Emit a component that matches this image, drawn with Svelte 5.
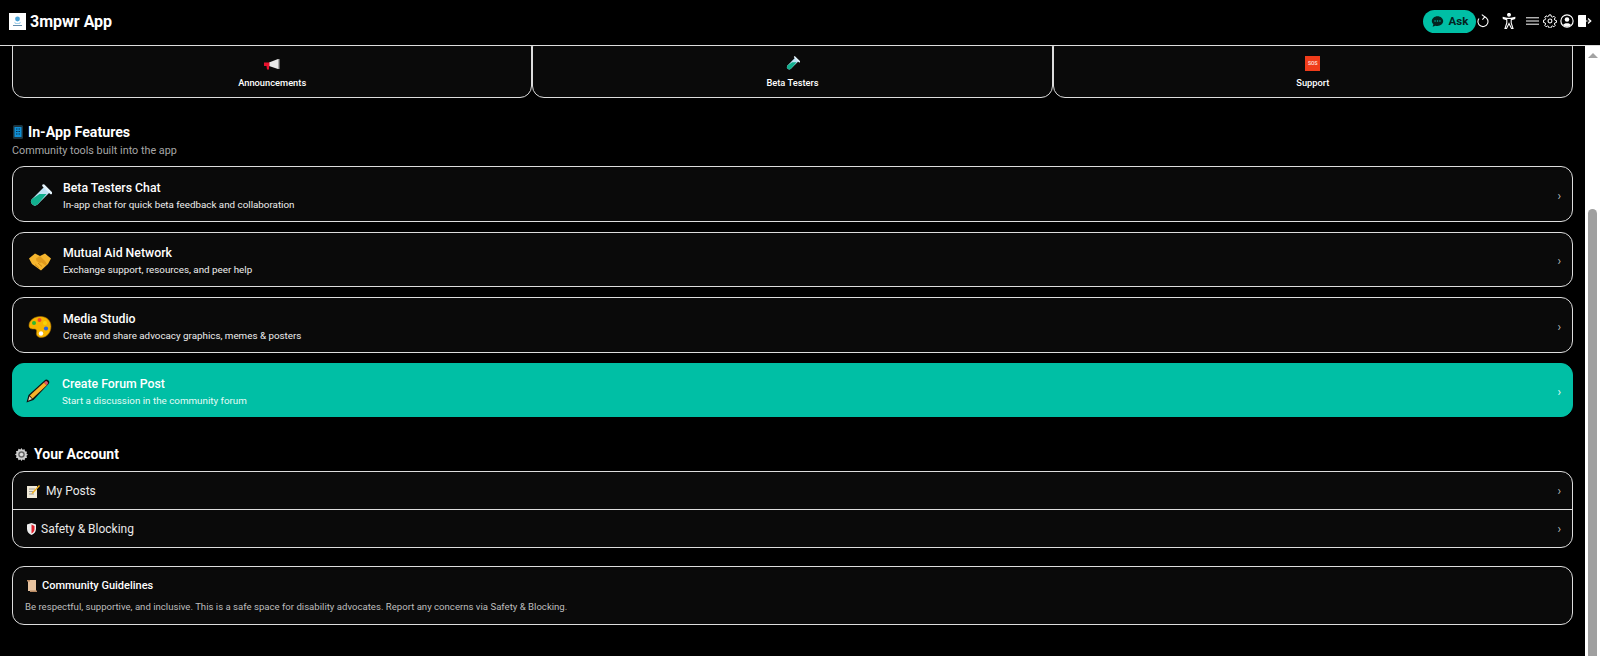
<script lang="ts">
  const features = [
    { title: 'Beta Testers Chat', desc: 'In-app chat for quick beta feedback and collaboration', icon: tube, h: 56 },
    { title: 'Mutual Aid Network', desc: 'Exchange support, resources, and peer help', icon: handshake, h: 55 },
    { title: 'Media Studio', desc: 'Create and share advocacy graphics, memes & posters', icon: palette, h: 56 }
  ];
</script>

{#snippet tube()}
  <path d="M16.5 2.5 22 8 9.5 20.5a3.9 3.9 0 0 1-5.5-5.5z" fill="#bfe3f5" />
  <path d="M11.5 10H18.500L9.500 20.500a3.900 3.900 0 0 1-5.500-5.500z" fill="#11b08e" />
  <path d="M15.500 1.500 23 9" stroke="#e4f3fb" stroke-width="2.500" stroke-linecap="round" />
{/snippet}

{#snippet handshake()}
  <path d="M1 9.500 7 4.500l5 2.500 5-2.500 6 5-3 5.500-7 6.500L4 15z" fill="#f5b52e" />
  <path d="M8 9.500 12 7l5 5 2 3-1.500 1.500-4-3-2 .5-3-2z" fill="#e09a1c" />
  <path d="M7 15.500l4 3.500M10 14l4 3.500" stroke="#d08a14" stroke-width="1" />
{/snippet}

{#snippet palette()}
  <path d="M12.500 1.500C6 1.500 1 5.500 1 10.500c0 3.500 3 3.500 5.500 3.500 2 0 2.500 1.500 2 3.500-.5 2.500 1 5 4.500 5 6 0 10-5 10-11S18.500 1.500 12.500 1.500z" fill="#f7b500" stroke="#a86f00" stroke-width=".6" />
  <circle cx="6" cy="8" r="2" fill="#2fb82f" />
  <circle cx="11.500" cy="5" r="2" fill="#ee4a2a" />
  <circle cx="17" cy="8" r="2" fill="#f7d40a" />
  <circle cx="18" cy="13.500" r="2.100" fill="#2a63d8" />
  <circle cx="13" cy="18.500" r="2.200" fill="#fff" />
{/snippet}

<div class="page">
  <header class="topbar">
    <div class="brand">
      <span class="logo">
        <svg viewBox="0 0 17 17" width="17" height="17">
          <circle cx="8.500" cy="6" r="2.400" fill="#4aa3d8" />
          <path d="M5 8.500c1.200 2 5.800 2 7 0l-1 2H6z" fill="#4aa3d8" />
          <path d="M4 12.500h9" stroke="#3a6d96" stroke-width=".8" />
        </svg>
      </span>
      <span class="app-name">3mpwr App</span>
    </div>
    <div class="actions">
      <button class="ask">
        <svg viewBox="0 0 16 16" width="13" height="13">
          <path d="M8 1.500c3.900 0 7 2.700 7 6s-3.100 6-7 6c-.9 0-1.800-.1-2.600-.4L2 14.500l.9-3.100C1.700 10.300 1 9 1 7.500c0-3.300 3.100-6 7-6z" fill="#04241f" />
          <circle cx="5" cy="7.500" r=".9" fill="#00bfa5" /><circle cx="8" cy="7.500" r=".9" fill="#00bfa5" /><circle cx="11" cy="7.500" r=".9" fill="#00bfa5" />
        </svg>
        Ask
      </button>
      <svg class="i refresh" viewBox="0 0 12 14" width="12" height="14" fill="none" stroke="#fff" stroke-width="1.100">
        <path d="M7.500 2.800A5 5 0 1 1 2 4.500" />
        <path d="M4.800.6 7.800 2.800 5.400 5.600" />
      </svg>
      <svg class="i person" viewBox="0 0 14 16" width="14" height="16" fill="none" stroke="#fff" stroke-width="1.100">
        <circle cx="7" cy="1.800" r="1.400" fill="#fff" />
        <path d="M.6 4.200 5 5.400h4l4.400-1.200M.8 5.400 4.800 6.600v3.200L3 15.500h1.500L7 10.500l2.500 5H11L9.200 9.800V6.600l4-1.200" />
      </svg>
      <svg class="i menu" viewBox="0 0 13 8" width="13" height="8" stroke="#fff" stroke-width="1">
        <path d="M0 .800h13M0 4h13M0 7.200h13" />
      </svg>
      <svg class="i gear-i" viewBox="0 0 16 16" width="14" height="14" fill="none" stroke="#fff" stroke-width="1.200">
        <path d="M6.800 1h2.400l.4 2 1.300.6 1.800-1 1.600 1.700-1.100 1.700.6 1.300 2 .5v2.300l-2 .5-.6 1.300 1.100 1.700-1.600 1.700-1.800-1-1.300.6-.4 2H6.800l-.4-2-1.300-.6-1.800 1-1.600-1.700 1.100-1.700-.6-1.300-2-.5V7.300l2-.5.6-1.300L1.700 3.800l1.600-1.700 1.800 1 1.300-.6z" transform="translate(.4 .1) scale(.95)" />
        <circle cx="8" cy="8" r="2.200" />
      </svg>
      <svg class="i user" viewBox="0 0 16 16" width="14" height="14">
        <circle cx="8" cy="8" r="7" fill="none" stroke="#fff" stroke-width="1.300" />
        <circle cx="8" cy="6.200" r="2.600" fill="#fff" />
        <path d="M3.500 12.500c1-2.500 8-2.500 9 0A6 6 0 0 1 3.500 12.500z" fill="#fff" />
      </svg>
      <svg class="i logout" viewBox="0 0 14 12" width="14" height="12">
        <path d="M1 0h7v12H1a1 1 0 0 1-1-1V1a1 1 0 0 1 1-1z" fill="#fff" />
        <path d="M8 6h4" stroke="#fff" stroke-width="1.200" stroke-dasharray="1.500 1" />
        <path d="M10 3.500 12.800 6 10 8.500" fill="none" stroke="#fff" stroke-width="1.200" />
      </svg>
    </div>
  </header>

  <div class="body">
    <main class="content">
      <div class="channels">
        <div class="channel">
          <svg viewBox="0 0 16 12" width="16" height="12">
            <path d="M5 3.500 14 0v10L5 7z" fill="#e8e8e8" />
            <path d="M14 0h1.500v10H14z" fill="#aaa" />
            <path d="M0 3.500h5.500v3.500H0zM2.500 7H5v3.500H3z" fill="#e8112d" />
          </svg>
          <span>Announcements</span>
        </div>
        <div class="channel">
          <svg viewBox="0 0 24 24" width="15" height="15">{@render tube()}</svg>
          <span>Beta Testers</span>
        </div>
        <div class="channel">
          <span class="sos">SOS</span>
          <span>Support</span>
        </div>
      </div>

      <section class="features">
        <h2>
          <svg viewBox="0 0 10 14" width="10" height="14">
            <rect width="10" height="14" rx="1.500" fill="#1d3540" />
            <rect x="1.500" y="2" width="7" height="10" fill="#0f8fd6" />
            <path d="M3 4h1.500M5.500 4H7M3 6.500h1.500M5.500 6.500H7M3 9h1.500M5.500 9H7" stroke="#07314a" />
          </svg>
          In-App Features
        </h2>
        <p class="sub">Community tools built into the app</p>
        <div class="feature-list">
          {#each features as f}
            <div class="feature" style="height: {f.h}px">
              <svg viewBox="0 0 24 24" width="24" height="24">{@render f.icon()}</svg>
              <div class="text">
                <div class="title">{f.title}</div>
                <div class="desc">{f.desc}</div>
              </div>
              <span class="chev">›</span>
            </div>
          {/each}
          <div class="feature primary">
            <svg viewBox="0 0 26 26" width="26" height="26">
              <path d="M1.500 24.500 3.500 17 19.500 2.500a2.500 2.500 0 0 1 4 3.500L8.500 22z" fill="#111" />
              <path d="M4.800 17.500 19 4.500l2.700 2.700L7.500 20.400z" fill="#f6b32a" />
              <path d="M19.800 3.800a1.800 1.800 0 0 1 2.700 2.500l-.8.900-2.700-2.700z" fill="#e0566b" />
              <path d="M4.400 18.300 7 21l-3.800 1.800z" fill="#f3d3ae" />
            </svg>
            <div class="text">
              <div class="title">Create Forum Post</div>
              <div class="desc">Start a discussion in the community forum</div>
            </div>
            <span class="chev">›</span>
          </div>
        </div>
      </section>

      <section class="account">
        <h2>
          <svg class="gear" viewBox="0 0 16 16" width="13" height="13">
            <path d="M8 0l1.300 2.200 2.500-.7.500 2.500 2.500.5-.7 2.500L16 8l-1.900 1.500.7 2.500-2.500.5-.5 2.500-2.500-.7L8 16l-1.300-1.700-2.500.7-.5-2.500-2.500-.5.7-2.500L0 8l1.900-1.500-.7-2.500 2.500-.5.5-2.500 2.500.7z" fill="#cfcfcf" />
            <circle cx="8" cy="8" r="4" fill="#666" /><circle cx="8" cy="8" r="2.200" fill="#ddd" />
          </svg>
          Your Account
        </h2>
        <div class="account-list">
          <div class="row">
            <svg viewBox="0 0 13 13" width="13" height="13">
              <path d="M0 1h10v12H0z" fill="#f1ead8" />
              <path d="M2 4h6M2 6.500h4M2 9h5" stroke="#8a8a8a" stroke-width=".8" />
              <path d="M12 0l1 1-7 7.500-1.500.5.500-1.500z" fill="#f2b01e" />
            </svg>
            <span>My Posts</span>
            <span class="chev">›</span>
          </div>
          <div class="row safety">
            <svg viewBox="0 0 9 12" width="9" height="12">
              <path d="M0 1.500 4.500 0 9 1.500V6c0 3-2 5-4.500 6C2 11 0 9 0 6z" fill="#eee" />
              <path d="M4.500 1.500 7.500 3v3c0 2-1.300 3.500-3 4.500z" fill="#e2202c" />
            </svg>
            <span>Safety &amp; Blocking</span>
            <span class="chev">›</span>
          </div>
        </div>
      </section>

      <section class="guidelines">
        <h3>
          <svg viewBox="0 0 10 12" width="10" height="12">
            <path d="M1 0h8v11H1z" fill="#e7c3a0" />
            <path d="M0 0h3v1.500H0zM3 10.500h7V12H3z" fill="#b98a63" />
          </svg>
          Community Guidelines
        </h3>
        <p>Be respectful, supportive, and inclusive. This is a safe space for disability advocates. Report any concerns via Safety &amp; Blocking.</p>
      </section>
    </main>

    <div class="scrollbar">
      <span class="arrow"></span>
      <span class="thumb"></span>
    </div>
  </div>
</div>

<style>
  :global(body) {
    margin: 0;
    background: #000;
    font-family: Roboto, "Noto Sans", sans-serif;
    color: #fff;
  }
  .page {
    height: 656px;
    display: flex;
    flex-direction: column;
    overflow: hidden;
  }
  .topbar {
    height: 46px;
    flex: none;
    box-sizing: border-box;
    background: #000;
    border-bottom: 1px solid #ddd;
    display: flex;
    align-items: center;
    justify-content: space-between;
    padding: 0 9px 3px;
    position: relative;
    z-index: 2;
  }
  .brand {
    display: flex;
    align-items: center;
    gap: 4px;
  }
  .logo {
    width: 17px;
    height: 17px;
    background: #fff;
    display: block;
  }
  .logo svg { display: block; }
  .app-name {
    font-size: 16px;
    font-weight: 700;
  }
  .actions {
    display: flex;
    align-items: center;
    margin-right: -1px;
  }
  .ask {
    width: 53px;
    height: 23px;
    border: 0;
    border-radius: 12px;
    background: #00bfa5;
    color: #04241f;
    font: 700 11.500px Roboto, sans-serif;
    display: flex;
    align-items: center;
    justify-content: center;
    gap: 5px;
    padding: 0;
  }
  .refresh { margin-left: 1px; }
  .person { margin-left: 13px; }
  .menu { margin-left: 10px; }
  .gear-i { margin-left: 4px; }
  .user { margin-left: 3px; }
  .logout { margin-left: 4px; }

  .body {
    flex: 1;
    display: flex;
    min-height: 0;
  }
  .content {
    flex: 1;
    min-width: 0;
    padding: 0 12px;
    margin-top: -11px;
  }
  .channels {
    display: grid;
    grid-template-columns: repeat(3, 1fr);
    height: 63px;
  }
  .channel {
    box-sizing: border-box;
    background: #0a0a0a;
    border: 1px solid #ddd;
    border-radius: 12px;
    display: flex;
    flex-direction: column;
    align-items: center;
    justify-content: flex-end;
    gap: 6px;
    padding-bottom: 9px;
    font-size: 9.300px;
    font-weight: 500;
  }
  .sos {
    width: 15px;
    height: 15px;
    background: #f03c1a;
    color: #ffe9e2;
    font-size: 5px;
    line-height: 15px;
    text-align: center;
  }
  h2 {
    margin: 0;
    font-size: 14.200px;
    font-weight: 700;
    line-height: 18px;
    display: flex;
    align-items: center;
  }
  .features { margin-top: 25px; }
  .features h2 { gap: 5px; margin-left: 1px; }
  .sub {
    margin: 2px 0 7px;
    font-size: 10.800px;
    line-height: 16px;
    color: #a6a6a6;
  }
  .feature-list {
    display: flex;
    flex-direction: column;
    gap: 10px;
  }
  .feature {
    box-sizing: border-box;
    height: 54px;
    background: #0a0a0a;
    border: 1px solid #ddd;
    border-radius: 12px;
    display: flex;
    align-items: center;
    padding: 0 11px 0 15px;
    gap: 11px;
    color: #fff;
  }
  .feature svg { margin-top: 3px; }
  .text {
    flex: 1;
    padding-top: 3px;
  }
  .title {
    font-size: 12.300px;
    font-weight: 500;
    line-height: 17px;
  }
  .desc {
    font-size: 9.800px;
    line-height: 14px;
    margin-top: 1px;
    color: #eee;
  }
  .chev {
    font-size: 12px;
    color: #bbb;
    margin-left: auto;
    margin-top: 3px;
  }
  .primary {
    background: #00bfa5;
    border-color: #00bfa5;
    padding-left: 12px;
  }
  .primary svg { margin-top: 2px; }
  .primary .text { padding-top: 3px; }
  .primary .chev, .primary .desc { color: #e4fbf6; }

  .account { margin-top: 28px; }
  .account h2 {
    font-size: 14px;
    gap: 6px;
    margin-left: 3px;
    margin-bottom: 8px;
  }
  .account-list {
    background: #0a0a0a;
    border: 1px solid #ddd;
    border-radius: 12px;
    overflow: hidden;
  }
  .row {
    height: 37px;
    display: flex;
    align-items: center;
    gap: 6px;
    padding: 1px 11px 0 14px;
    box-sizing: border-box;
    font-size: 12px;
    color: #e8e8e8;
  }
  .row .chev { margin-top: 0; }
  .safety {
    height: 38px;
    border-top: 1px solid #ddd;
    gap: 5px;
  }
  .guidelines {
    box-sizing: border-box;
    height: 59px;
    margin-top: 18px;
    background: #0a0a0a;
    border: 1px solid #ddd;
    border-radius: 12px;
    padding: 12px 12px 0;
  }
  h3 {
    margin: 0;
    font-size: 11px;
    font-weight: 500;
    line-height: 14px;
    display: flex;
    align-items: center;
    gap: 5px;
    padding-left: 2px;
  }
  .guidelines p {
    margin: 7px 0 0;
    font-size: 9.600px;
    line-height: 14px;
    color: #bdbdbd;
  }
  .scrollbar {
    width: 15px;
    flex: none;
    background: #fff;
    position: relative;
    display: flex;
    flex-direction: column;
    align-items: center;
  }
  .arrow {
    margin-top: 7px;
    width: 0;
    height: 0;
    border-left: 5px solid transparent;
    border-right: 5px solid transparent;
    border-bottom: 5px solid #a3a3a3;
  }
  .thumb {
    position: absolute;
    top: 163px;
    bottom: 0;
    left: 3px;
    width: 9px;
    background: #a0a0a0;
    border-radius: 5px 5px 0 0;
  }
</style>
